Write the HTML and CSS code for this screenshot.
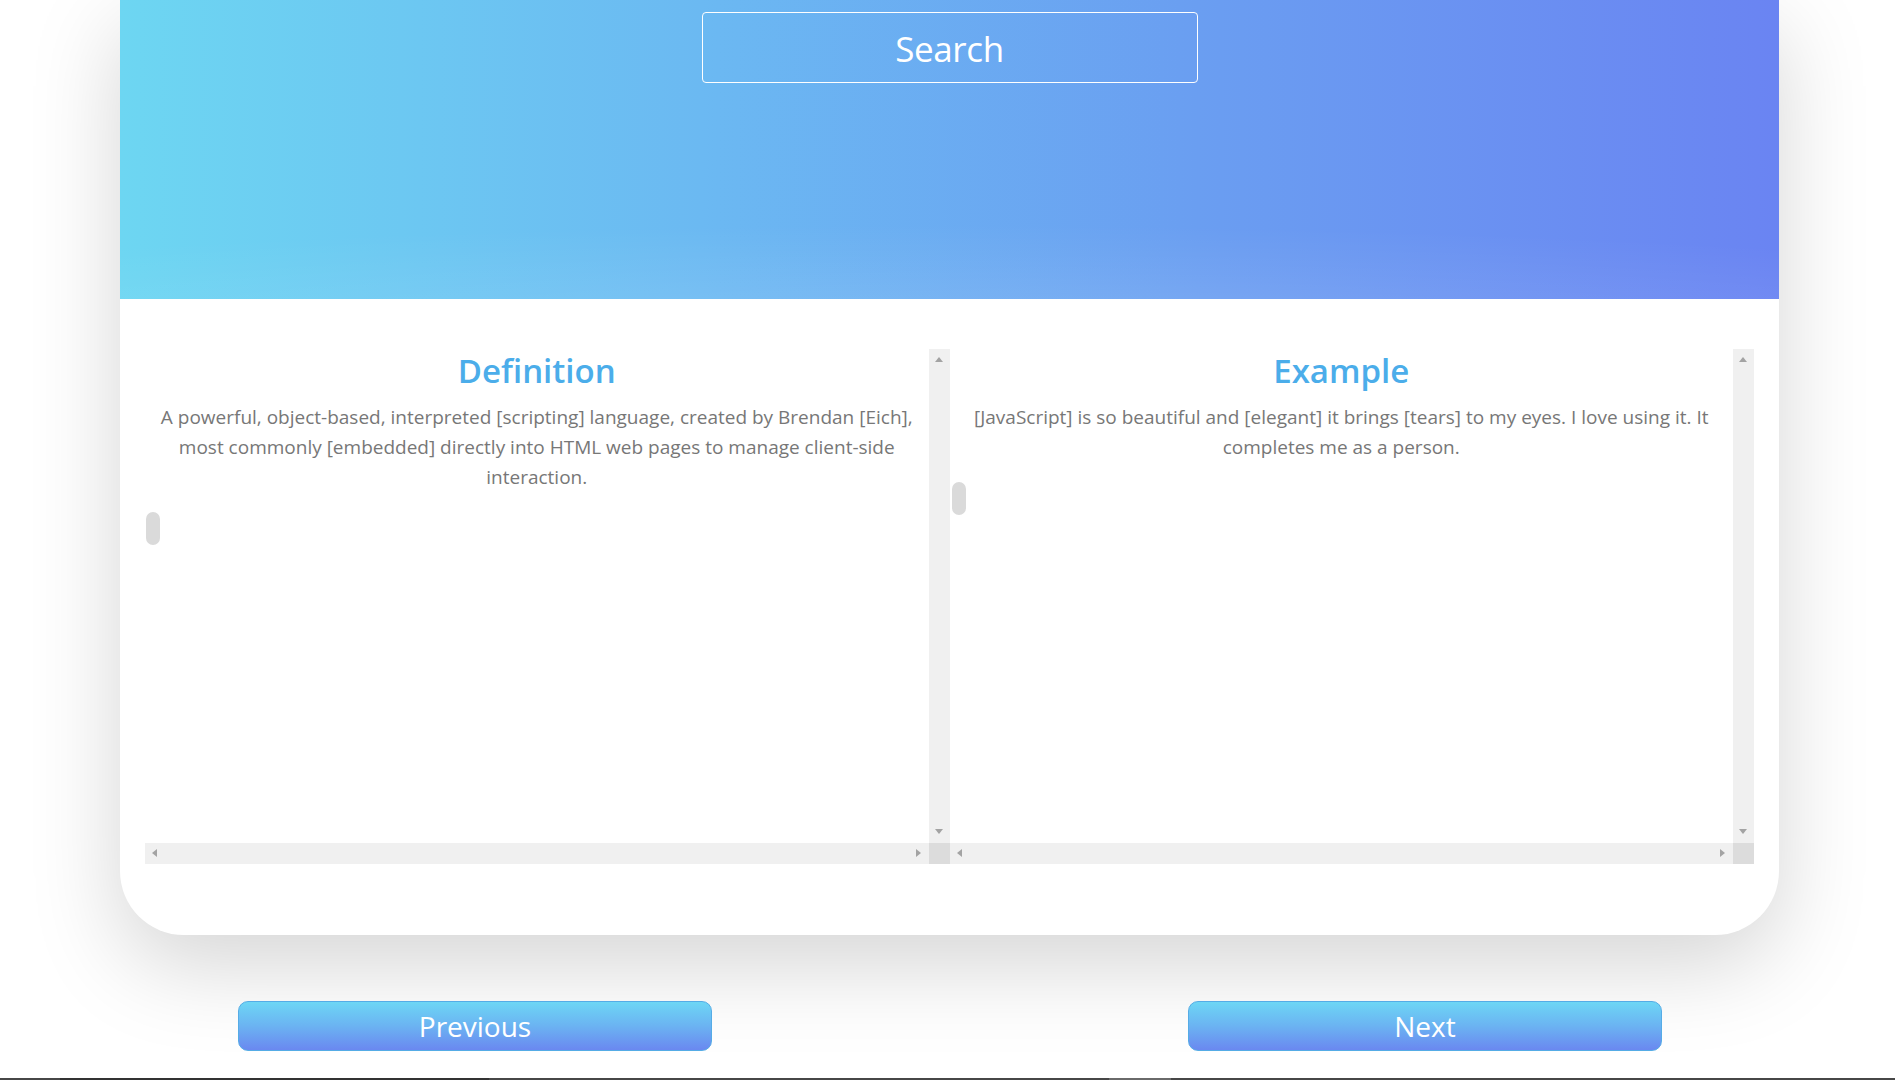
FILE: index.html
```html
<!DOCTYPE html>
<html lang="en">
<head>
<meta charset="utf-8">
<title>Dictionary</title>
<link rel="stylesheet" href="styles.css">
</head>
<body>
<div class="card">
  <div class="header">
    <div class="search">Search</div>
  </div>
  <div class="panes">
    <div class="pane">
      <div class="content">
        <h2 class="title">Definition</h2>
        <p class="text">A powerful, object-based, interpreted [scripting] language, created by Brendan [Eich], most commonly [embedded] directly into HTML web pages to manage client-side interaction.</p>
        <div class="thumb thumb-left"></div>
      </div>
      <div class="vbar"><span class="arr up"></span><span class="arr down"></span></div>
      <div class="hbar"><span class="arr left"></span><span class="arr right"></span></div>
      <div class="corner"></div>
    </div>
    <div class="pane">
      <div class="content">
        <h2 class="title">Example</h2>
        <p class="text">[JavaScript] is so beautiful and [elegant] it brings [tears] to my eyes. I love using it. It completes me as a person.</p>
        <div class="thumb thumb-right"></div>
      </div>
      <div class="vbar"><span class="arr up"></span><span class="arr down"></span></div>
      <div class="hbar"><span class="arr left"></span><span class="arr right"></span></div>
      <div class="corner"></div>
    </div>
  </div>
</div>
<div class="nav">
  <button class="btn">Previous</button>
  <button class="btn">Next</button>
</div>
<div class="bottom-bar"><span class="seg-dark"></span><span class="seg-light"></span></div>
</body>
</html>
```
FILE: styles.css
```css
html, body {
  margin: 0;
  padding: 0;
  height: 1080px;
  overflow: hidden;
  background: #ffffff;
  font-family: "Open Sans", "Noto Sans", sans-serif;
}

.card {
  margin-left: 120px;
  width: 1659px;
  background: #ffffff;
  border-radius: 0 0 64px 64px;
  box-shadow: 0 30px 90px rgba(0, 0, 0, 0.17);
}

.header {
  height: 299px;
  box-sizing: border-box;
  padding-top: 12px;
  display: flex;
  justify-content: center;
  align-items: flex-start;
  background:
    radial-gradient(ellipse 90% 45% at 50% 120%, rgba(255, 255, 255, 0.16), rgba(255, 255, 255, 0) 100%),
    linear-gradient(to right, #6dd6f2 0%, #6bb9f2 35%, #6a9ef1 65%, #6a84f2 100%);
}

.search {
  width: 496px;
  height: 71px;
  box-sizing: border-box;
  border: 1.5px solid #ffffff;
  border-radius: 4px;
  color: #ffffff;
  font-size: 35px;
  letter-spacing: -0.4px;
  line-height: 72px;
  text-align: center;
}

.panes {
  display: flex;
  padding: 50px 25px 71px;
}

.pane {
  flex: 1 1 0;
  height: 515px;
  display: grid;
  grid-template-columns: 1fr 21px;
  grid-template-rows: 1fr 21px;
}

.content {
  padding-top: 2px;
  text-align: center;
  min-width: 0;
}

.title {
  margin: 0;
  font-size: 33px;
  font-weight: 600;
  line-height: 40px;
  color: #4badea;
}

.text {
  margin: 11px 0 0;
  padding: 0 10px;
  font-size: 19px;
  line-height: 30px;
  color: #777777;
}

.thumb {
  width: 14px;
  height: 33px;
  border-radius: 7px;
  background: #dadada;
  margin-top: 20px;
}

.thumb-left { margin-left: 1px; }
.thumb-right { margin-left: 2px; }

.vbar {
  background: #f0f0f0;
  position: relative;
}

.hbar {
  background: #f0f0f0;
  position: relative;
}

.corner {
  background: #dcdcdc;
}

.arr {
  position: absolute;
  width: 0;
  height: 0;
}

.arr.up {
  left: 6px;
  top: 8px;
  border-left: 4.5px solid transparent;
  border-right: 4.5px solid transparent;
  border-bottom: 5px solid #a3a3a3;
}

.arr.down {
  left: 6px;
  bottom: 9px;
  border-left: 4.5px solid transparent;
  border-right: 4.5px solid transparent;
  border-top: 5px solid #a3a3a3;
}

.arr.left {
  left: 7px;
  top: 6px;
  border-top: 4.5px solid transparent;
  border-bottom: 4.5px solid transparent;
  border-right: 5px solid #a3a3a3;
}

.arr.right {
  right: 8px;
  top: 6px;
  border-top: 4.5px solid transparent;
  border-bottom: 4.5px solid transparent;
  border-left: 5px solid #a3a3a3;
}

.nav {
  display: flex;
  justify-content: space-between;
  padding: 0 233px 0 238px;
  margin-top: 66px;
}

.btn {
  width: 474px;
  height: 50px;
  box-sizing: border-box;
  border: 1px solid #55ace6;
  border-radius: 10px;
  background: linear-gradient(to bottom, #6dd6f5 0%, #6bb3f2 50%, #6a88f0 100%);
  color: #ffffff;
  font-family: "Open Sans", "Noto Sans", sans-serif;
  font-size: 28px;
  line-height: 48px;
  padding: 0;
  text-align: center;
}

.bottom-bar {
  position: fixed;
  left: 0;
  right: 0;
  bottom: 0;
  height: 2px;
  background: #474747;
}

.seg-dark {
  position: absolute;
  left: 60px;
  width: 429px;
  top: 0;
  height: 2px;
  background: #333333;
}

.seg-light {
  position: absolute;
  left: 1109px;
  width: 62px;
  top: 0;
  height: 2px;
  background: #6a6a6a;
}
```
